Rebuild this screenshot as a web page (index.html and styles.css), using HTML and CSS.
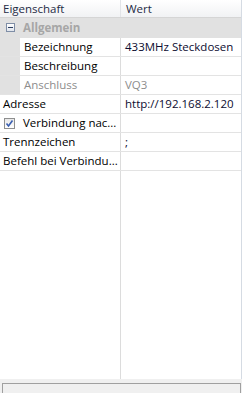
FILE: index.html
```html
<!DOCTYPE html>
<html>
<head>
<meta charset="utf-8">
<link rel="stylesheet" href="styles.css">
</head>
<body>
<div class="window">
  <div class="grid">
    <div class="row header">
      <div class="name">Eigenschaft</div>
      <div class="value">Wert</div>
    </div>
    <div class="row group">
      <span class="toggle"></span>
      <span class="group-label">Allgemein</span>
    </div>
    <div class="row sub">
      <div class="margin"></div>
      <div class="name">Bezeichnung</div>
      <div class="value">433MHz Steckdosen</div>
    </div>
    <div class="row sub">
      <div class="margin"></div>
      <div class="name">Beschreibung</div>
      <div class="value"></div>
    </div>
    <div class="row sub readonly">
      <div class="margin"></div>
      <div class="name">Anschluss</div>
      <div class="value">VQ3</div>
    </div>
    <div class="row">
      <div class="name">Adresse</div>
      <div class="value">http://192.168.2.120</div>
    </div>
    <div class="row">
      <div class="name check-name"><span class="checkbox"><svg width="9" height="9" viewBox="0 0 9 9"><path d="M1.5 4.5 L3.5 7 L7.5 1.5" fill="none" stroke="#3a5fb0" stroke-width="1.6"/></svg></span>Verbindung nac...</div>
      <div class="value"></div>
    </div>
    <div class="row">
      <div class="name">Trennzeichen</div>
      <div class="value">;</div>
    </div>
    <div class="row">
      <div class="name">Befehl bei Verbindu...</div>
      <div class="value"></div>
    </div>
    <div class="filler">
      <div class="name"></div>
      <div class="value"></div>
    </div>
  </div>
  <div class="desc-area">
    <div class="desc"></div>
  </div>
</div>
</body>
</html>
```
FILE: styles.css
```css
html, body {
  margin: 0;
  padding: 0;
  background: #ffffff;
}
body {
  width: 242px;
  height: 393px;
  overflow: hidden;
  font-family: "Open Sans", "Liberation Sans", sans-serif;
  font-size: 11.5px;
  color: #000000;
}
.window {
  width: 242px;
  height: 393px;
  display: flex;
  flex-direction: column;
  background: #f0f0f0;
}
.grid {
  flex: 1;
  display: flex;
  flex-direction: column;
  background: #ffffff;
  border-right: 1px solid #d5dbe3;
}
.row {
  display: flex;
  height: 18px;
  border-bottom: 1px solid #e3e3e3;
  align-items: stretch;
  flex: none;
}
.name {
  width: 121px;
  box-sizing: border-box;
  border-right: 1px solid #dcdcdc;
  padding-left: 3px;
  line-height: 18px;
  white-space: nowrap;
  overflow: hidden;
}
.value {
  flex: 1;
  padding-left: 4px;
  line-height: 18px;
  white-space: nowrap;
  overflow: hidden;
  color: #0c0c30;
}
.header {
  height: 17px;
  background: linear-gradient(#ffffff, #f1f2f4);
  border-bottom: 1px solid #d5d5d5;
}
.header .name {
  line-height: 17px;
  border-right: 1px solid #e2e4e8;
  color: #1e2b45;
}
.header .value {
  line-height: 17px;
  padding-left: 5px;
  color: #1e2b45;
}
.group {
  height: 19px;
  background: #e1e1e1;
  border-bottom: 1px solid #e1e1e1;
  align-items: center;
}
.toggle {
  width: 7px;
  height: 7px;
  margin-left: 6px;
  border: 1px solid #7f8ea6;
  background: linear-gradient(#ffffff, #dfe4ec);
  position: relative;
  flex: none;
}
.toggle::after {
  content: "";
  position: absolute;
  left: 1px;
  top: 3px;
  width: 5px;
  height: 1px;
  background: #2c3e60;
}
.group-label {
  margin-left: 8px;
  font-weight: bold;
  color: #a6a6a6;
}
.sub .margin {
  width: 20px;
  background: #e1e1e1;
  flex: none;
}
.sub .name {
  width: 101px;
  padding-left: 4px;
}
.readonly .name,
.readonly .value {
  color: #8d8d8d;
}
.check-name {
  display: flex;
  align-items: center;
  padding-left: 4px;
}
.checkbox {
  width: 11px;
  height: 11px;
  box-sizing: border-box;
  border: 1px solid #8e8f8f;
  background: linear-gradient(#e8e8e8, #ffffff);
  display: flex;
  align-items: center;
  justify-content: center;
  margin-right: 8px;
  flex: none;
}
.filler {
  flex: 1;
  display: flex;
}
.filler .name {
  border-right: 1px solid #dcdcdc;
}
.desc-area {
  height: 14px;
  padding: 4px 1px 0 2px;
  box-sizing: border-box;
  background: #f0f0f0;
}
.desc {
  height: 100%;
  box-sizing: border-box;
  border-top: 1px solid #a0a0a0;
  border-left: 1px solid #a0a0a0;
  border-right: 1px solid #a0a0a0;
  background: #f0f0f0;
}
```
